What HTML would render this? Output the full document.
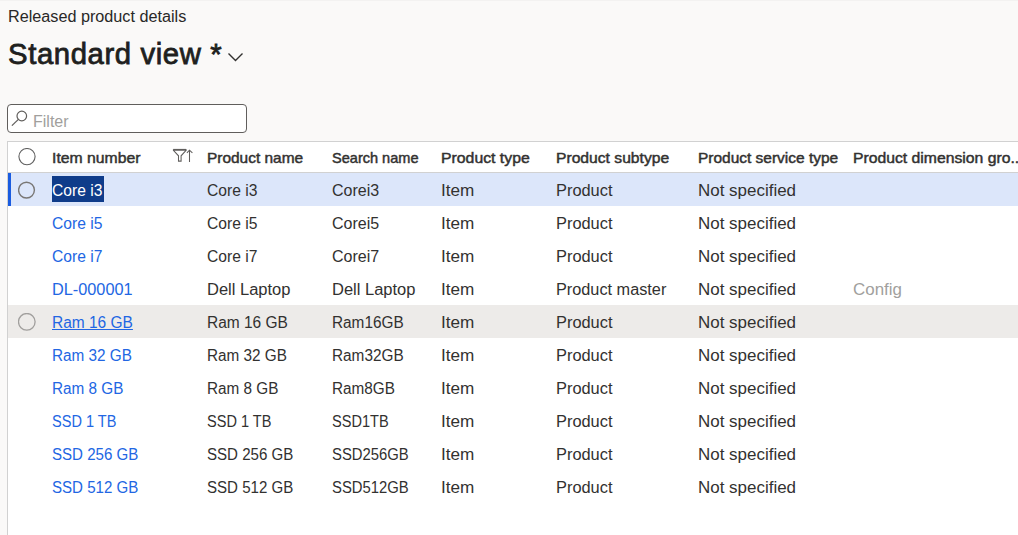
<!DOCTYPE html><html><head><meta charset="utf-8"><style>
*{margin:0;padding:0;box-sizing:border-box}
html,body{width:1018px;height:535px;overflow:hidden;background:#faf9f8;font-family:"Liberation Sans",sans-serif;color:#323130}
.a{position:absolute;white-space:nowrap}
#cap{left:8px;top:5px;font-size:16px;line-height:24px;color:#292827;transform:scaleX(1.012);transform-origin:0 0}
#title{left:8px;top:36px;font-size:29px;letter-spacing:0.6px;transform:scaleX(1.01);transform-origin:0 0;line-height:36px;font-weight:normal;-webkit-text-stroke:0.8px #201f1e;color:#201f1e}
#chev{left:227px;top:50px}
#filter{left:7px;top:104px;width:240px;height:29px;border:1px solid #605e5c;border-radius:4px;background:#fff}
#filter span{position:absolute;left:25px;top:7px;font-size:16px;line-height:20px;color:#a19f9d}
#filter svg{position:absolute;left:3px;top:5px}
#grid{left:7px;top:141px;width:1100px;height:400px;background:#fff;border-left:1px solid #d1d1d1;border-top:1px solid #d1d1d1}
#hdrline{left:8px;top:172px;width:1010px;height:1px;background:#d1d1d1}
#topline{left:0;top:0;width:1018px;height:1px;background:#f3f2f1}
.h{top:143px;height:30px;line-height:30px;font-size:14.5px;font-weight:normal;-webkit-text-stroke:0.45px #323130;color:#323130}
.r{height:33px}
.c{font-size:16px;line-height:33px;transform-origin:0 0;color:#323130}
.lnk{color:#2266e3}
.sel{left:8px;width:1010px;background:#dce6fa}
.hov{left:8px;width:1010px;background:#edebe9}
.bar{left:8px;width:3px;background:#1a5ce0}
.circ{position:absolute}
</style></head><body>
<div class="a" id="topline"></div>
<div class="a" id="cap">Released product details</div>
<div class="a" id="title">Standard view *</div>
<svg class="a" id="chev" width="18" height="14" viewBox="0 0 18 14"><path d="M1.5 3.5 L8.5 10.5 L15.5 3.5" fill="none" stroke="#323130" stroke-width="1.4"/></svg>
<div class="a" id="filter"><svg width="18" height="18" viewBox="0 0 18 18"><circle cx="10.8" cy="6" r="4.8" fill="none" stroke="#605e5c" stroke-width="1.2"/><path d="M7.4 9.4 L0.9 15.6" stroke="#605e5c" stroke-width="1.3" fill="none"/></svg><span>Filter</span></div>
<div class="a" id="grid"></div>
<div class="a" id="hdrline"></div>
<svg class="a" style="left:18px;top:148px" width="18" height="18" viewBox="0 0 18 18"><circle cx="9" cy="8.6" r="8.1" fill="none" stroke="#616161" stroke-width="1.1"/></svg>
<div class="a h" style="left:52px;transform:scaleX(1.087);transform-origin:0 0">Item number</div>
<div class="a h" style="left:207px;transform:scaleX(1.065);transform-origin:0 0">Product name</div>
<div class="a h" style="left:332px;transform:scaleX(1.003);transform-origin:0 0">Search name</div>
<div class="a h" style="left:441px;transform:scaleX(1.09);transform-origin:0 0">Product type</div>
<div class="a h" style="left:556px;transform:scaleX(1.08);transform-origin:0 0">Product subtype</div>
<div class="a h" style="left:698px;transform:scaleX(1.067);transform-origin:0 0">Product service type</div>
<div class="a h" style="left:853px;transform:scaleX(1.085);transform-origin:0 0">Product dimension gro..</div>
<svg class="a" style="left:172px;top:148px" width="22" height="15" viewBox="0 0 22 15"><path d="M1.4 1.9 H14.1 V2.4 L9.1 7.8 V13.1 H6.5 V7.8 L1.4 2.4 Z" fill="none" stroke="#605e5c" stroke-width="1.05" stroke-linejoin="miter"/><path d="M1.2 1.7 H14.3" stroke="#605e5c" stroke-width="1.6"/><path d="M17.5 2.2 V13.9 M14.9 4.9 L17.5 2.2 L20.4 4.9" fill="none" stroke="#605e5c" stroke-width="1.05"/></svg>
<div class="a sel" style="top:173px;height:33px"></div>
<div class="a bar" style="top:173px;height:33px"></div>
<svg class="a" style="left:18px;top:181px" width="18" height="18" viewBox="0 0 18 18"><circle cx="8.5" cy="9.1" r="7.9" fill="none" stroke="#797775" stroke-width="1.4"/></svg>
<div class="a" style="left:52px;top:176px;width:52px;height:26px;background:#0f3c8a"></div>
<div class="a c" style="left:52px;top:174px;transform:scaleX(0.977);color:#fff">Core i3</div>
<div class="a c" style="left:207px;top:174px;transform:scaleX(0.977)">Core i3</div>
<div class="a c" style="left:332px;top:174px;transform:scaleX(1.000)">Corei3</div>
<div class="a c" style="left:441px;top:174px;transform:scaleX(1.070)">Item</div>
<div class="a c" style="left:556px;top:174px;transform:scaleX(1.024)">Product</div>
<div class="a c" style="left:698px;top:174px;transform:scaleX(1.060)">Not specified</div>
<div class="a c lnk" style="left:52px;top:207px;transform:scaleX(0.977)">Core i5</div>
<div class="a c" style="left:207px;top:207px;transform:scaleX(0.977)">Core i5</div>
<div class="a c" style="left:332px;top:207px;transform:scaleX(1.000)">Corei5</div>
<div class="a c" style="left:441px;top:207px;transform:scaleX(1.070)">Item</div>
<div class="a c" style="left:556px;top:207px;transform:scaleX(1.024)">Product</div>
<div class="a c" style="left:698px;top:207px;transform:scaleX(1.060)">Not specified</div>
<div class="a c lnk" style="left:52px;top:240px;transform:scaleX(0.977)">Core i7</div>
<div class="a c" style="left:207px;top:240px;transform:scaleX(0.977)">Core i7</div>
<div class="a c" style="left:332px;top:240px;transform:scaleX(1.000)">Corei7</div>
<div class="a c" style="left:441px;top:240px;transform:scaleX(1.070)">Item</div>
<div class="a c" style="left:556px;top:240px;transform:scaleX(1.024)">Product</div>
<div class="a c" style="left:698px;top:240px;transform:scaleX(1.060)">Not specified</div>
<div class="a c lnk" style="left:52px;top:273px;transform:scaleX(1.018)">DL-000001</div>
<div class="a c" style="left:207px;top:273px;transform:scaleX(1.031)">Dell Laptop</div>
<div class="a c" style="left:332px;top:273px;transform:scaleX(1.031)">Dell Laptop</div>
<div class="a c" style="left:441px;top:273px;transform:scaleX(1.070)">Item</div>
<div class="a c" style="left:556px;top:273px;transform:scaleX(1.017)">Product master</div>
<div class="a c" style="left:698px;top:273px;transform:scaleX(1.060)">Not specified</div>
<div class="a c" style="left:853px;top:273px;transform:scaleX(1.058);color:#a19f9d">Config</div>
<div class="a hov" style="top:305px;height:33px"></div>
<svg class="a" style="left:18px;top:313px" width="18" height="18" viewBox="0 0 18 18"><circle cx="8.8" cy="8.8" r="8.3" fill="none" stroke="#a19f9d" stroke-width="1.3"/></svg>
<div class="a c lnk" style="left:52px;top:306px;transform:scaleX(0.968);text-decoration:underline">Ram 16 GB</div>
<div class="a c" style="left:207px;top:306px;transform:scaleX(0.968)">Ram 16 GB</div>
<div class="a c" style="left:332px;top:306px;transform:scaleX(0.959)">Ram16GB</div>
<div class="a c" style="left:441px;top:306px;transform:scaleX(1.070)">Item</div>
<div class="a c" style="left:556px;top:306px;transform:scaleX(1.024)">Product</div>
<div class="a c" style="left:698px;top:306px;transform:scaleX(1.060)">Not specified</div>
<div class="a c lnk" style="left:52px;top:339px;transform:scaleX(0.956)">Ram 32 GB</div>
<div class="a c" style="left:207px;top:339px;transform:scaleX(0.956)">Ram 32 GB</div>
<div class="a c" style="left:332px;top:339px;transform:scaleX(0.959)">Ram32GB</div>
<div class="a c" style="left:441px;top:339px;transform:scaleX(1.070)">Item</div>
<div class="a c" style="left:556px;top:339px;transform:scaleX(1.024)">Product</div>
<div class="a c" style="left:698px;top:339px;transform:scaleX(1.060)">Not specified</div>
<div class="a c lnk" style="left:52px;top:372px;transform:scaleX(0.957)">Ram 8 GB</div>
<div class="a c" style="left:207px;top:372px;transform:scaleX(0.957)">Ram 8 GB</div>
<div class="a c" style="left:332px;top:372px;transform:scaleX(0.957)">Ram8GB</div>
<div class="a c" style="left:441px;top:372px;transform:scaleX(1.070)">Item</div>
<div class="a c" style="left:556px;top:372px;transform:scaleX(1.024)">Product</div>
<div class="a c" style="left:698px;top:372px;transform:scaleX(1.060)">Not specified</div>
<div class="a c lnk" style="left:52px;top:405px;transform:scaleX(0.908)">SSD 1 TB</div>
<div class="a c" style="left:207px;top:405px;transform:scaleX(0.908)">SSD 1 TB</div>
<div class="a c" style="left:332px;top:405px;transform:scaleX(0.910)">SSD1TB</div>
<div class="a c" style="left:441px;top:405px;transform:scaleX(1.070)">Item</div>
<div class="a c" style="left:556px;top:405px;transform:scaleX(1.024)">Product</div>
<div class="a c" style="left:698px;top:405px;transform:scaleX(1.060)">Not specified</div>
<div class="a c lnk" style="left:52px;top:438px;transform:scaleX(0.942)">SSD 256 GB</div>
<div class="a c" style="left:207px;top:438px;transform:scaleX(0.942)">SSD 256 GB</div>
<div class="a c" style="left:332px;top:438px;transform:scaleX(0.927)">SSD256GB</div>
<div class="a c" style="left:441px;top:438px;transform:scaleX(1.070)">Item</div>
<div class="a c" style="left:556px;top:438px;transform:scaleX(1.024)">Product</div>
<div class="a c" style="left:698px;top:438px;transform:scaleX(1.060)">Not specified</div>
<div class="a c lnk" style="left:52px;top:471px;transform:scaleX(0.942)">SSD 512 GB</div>
<div class="a c" style="left:207px;top:471px;transform:scaleX(0.942)">SSD 512 GB</div>
<div class="a c" style="left:332px;top:471px;transform:scaleX(0.927)">SSD512GB</div>
<div class="a c" style="left:441px;top:471px;transform:scaleX(1.070)">Item</div>
<div class="a c" style="left:556px;top:471px;transform:scaleX(1.024)">Product</div>
<div class="a c" style="left:698px;top:471px;transform:scaleX(1.060)">Not specified</div>
</body></html>
